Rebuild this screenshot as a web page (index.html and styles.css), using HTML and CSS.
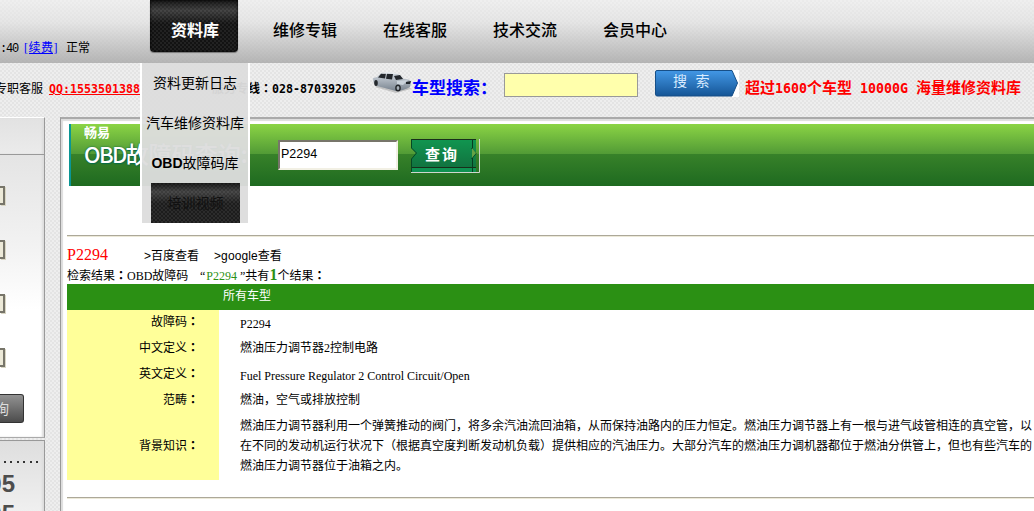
FILE: index.html
```html
<!DOCTYPE html>
<html lang="zh-CN">
<head>
    <meta charset="UTF-8">
    <title>OBD故障码查询</title>
    <link rel="stylesheet" href="styles.css">
</head>
<body>
    <div class="header">
        <div class="account"><span class="num">:40</span> <a href="#">[续费]</a> 正常</div>
        <ul class="nav">
            <li class="active"><a href="#">资料库</a>
                <ul class="dropdown">
                    <li>资料更新日志</li>
                    <li>汽车维修资料库</li>
                    <li><b>OBD</b>故障码库</li>
                    <li class="dark">培训视频</li>
                </ul>
            </li>
            <li><a href="#">维修专辑</a></li>
            <li><a href="#">在线客服</a></li>
            <li><a href="#">技术交流</a></li>
            <li><a href="#">会员中心</a></li>
        </ul>
    </div>

    <div class="contact">
        <div class="service"><span class="plain">专职客服</span><a href="#">QQ:1553501388</a><span class="hotline">服务专线<span class="colon" lang="zh-TW">：</span><i>028-87039205</i></span></div>
        <svg class="car" width="40" height="22" viewBox="0 0 40 22">
            <defs>
                <linearGradient id="paint" x1="0" y1="0" x2="0" y2="1">
                    <stop offset="0" stop-color="#d5dbe2"/>
                    <stop offset="1" stop-color="#78838f"/>
                </linearGradient>
            </defs>
            <path d="M3 15L24 21L39 17L35 13L8 11Z" fill="#aaa" opacity=".6"/>
            <path d="M1 6L5 5L9 1Q18-1 26 2L32 7Q38 7 39 10L38 15Q31 19 24 19L5 14Q1 12 1 6Z" fill="url(#paint)"/>
            <path d="M6 5.500L9 1.800L14 1.500L13 6.500Z M15 1.500L21 2L20 7.500L14 6.700Z M22 4L28 3L31 7L24 8Z" fill="#23272c"/>
            <path d="M9 1.500Q18-1 26 2L20 1.800Z" fill="#eef1f4"/>
            <path d="M25 9L36 8L31 13L25 12Z" fill="#c9d2da"/>
            <path d="M34 10L39 9L38 12L34 12Z" fill="#20262b"/>
            <ellipse cx="4" cy="11" rx="1.800" ry="3" fill="#24282c"/>
            <ellipse cx="26" cy="16" rx="2.800" ry="3.500" fill="#22262a"/>
            <ellipse cx="26" cy="16" rx="1.400" ry="2" fill="#a6afb7"/>
        </svg>
        <span class="car-label">车型搜索：</span>
        <input class="car-input" type="text">
        <div class="search-btn">
            <svg width="84" height="27" viewBox="0 0 84 27">
                <defs>
                    <linearGradient id="blue" x1="0" y1="0" x2="0" y2="1">
                        <stop offset="0" stop-color="#4398e6"/>
                        <stop offset="1" stop-color="#155596"/>
                    </linearGradient>
                </defs>
                <path d="M76 0H84V27H76Z" fill="#fff"/>
                <path d="M2 .5H77L82.500 13L77 26H2Q.5 26 .5 24V2Q.5.5 2 .5Z" fill="url(#blue)" stroke="#174f87"/>
            </svg>
            <span>搜&nbsp;索</span>
        </div>
        <div class="slogan">超过<i>1600</i>个车型<i>&nbsp;10000G&nbsp;</i>海量维修资料库</div>
    </div>

    <div class="main">
        <div class="sidebar">
            <div class="panel filter">
                <div class="panel-title"></div>
                <div class="field"></div>
                <div class="field"></div>
                <div class="field"></div>
                <div class="field"></div>
                <div class="query">查询</div>
            </div>
            <div class="panel phone">
                <div class="dots"></div>
                <div>028-87039205</div>
                <div>028-87039205</div>
            </div>
        </div>

        <div class="content">
            <div class="banner">
                <div class="banner-title"><small>畅易</small><strong><span>OBD</span>故障码查询:</strong></div>
                <input class="code-input" type="text" value="P2294">
                <div class="code-btn">
                    <svg width="69" height="34" viewBox="0 0 69 34">
                        <defs>
                            <linearGradient id="green" x1="0" y1="0" x2="0" y2="1">
                                <stop offset="0" stop-color="#119650"/>
                                <stop offset="1" stop-color="#116d3d"/>
                            </linearGradient>
                        </defs>
                        <path d="M0 0H65V33H0V20L5 14L0 9Z" fill="url(#green)"/>
                        <path d="M0 29H65V33H0Z" fill="#0f9252"/>
                        <path d="M0 .5H65M0 28.500H65" stroke="#182f1a"/>
                        <path d="M.5 0V9L5.500 14L.5 20V33" fill="none" stroke="#064724"/>
                        <path d="M61.500 0V33M60.500 9L65 14.500L60.500 20" fill="none" stroke="#063d21"/>
                        <path d="M61 9L65 14L61 19Z" fill="#65a346"/>
                        <path d="M68.500 0V33.500H0" fill="none" stroke="#cfd6cf"/>
                    </svg>
                    <span>查询</span>
                </div>
            </div>

            <hr class="line">
            <div class="links"><span class="code">P2294</span><span class="baidu">&gt;百度查看</span><span class="google">&gt;google查看</span></div>
            <div class="summary">检索结果<span class="colon" lang="zh-TW">：</span><span class="sum-obd">OBD故障码</span>“<em>P2294</em> ”共有<strong>1</strong>个结果<span class="colon" lang="zh-TW">：</span></div>

            <div class="table-head">所有车型</div>
            <div class="result">
                <div class="label">故障码<span class="colon" lang="zh-TW">：</span></div>
                <div class="value latin">P2294</div>
                <div class="label">中文定义<span class="colon" lang="zh-TW">：</span></div>
                <div class="value">燃油压力调节器2控制电路</div>
                <div class="label">英文定义<span class="colon" lang="zh-TW">：</span></div>
                <div class="value latin">Fuel Pressure Regulator 2 Control Circuit/Open</div>
                <div class="label">范畴<span class="colon" lang="zh-TW">：</span></div>
                <div class="value">燃油，空气或排放控制</div>
                <div class="label">背景知识<span class="colon" lang="zh-TW">：</span></div>
                <div class="value">燃油压力调节器利用一个弹簧推动的阀门，将多余汽油流回油箱，从而保持油路内的压力恒定。燃油压力调节器上有一根与进气歧管相连的真空管，以<br>在不同的发动机运行状况下（根据真空度判断发动机负载）提供相应的汽油压力。大部分汽车的燃油压力调机器都位于燃油分供管上，但也有些汽车的<br>燃油压力调节器位于油箱之内。</div>
            </div>
            <hr class="line bottom">
        </div>
    </div>
</body>
</html>
```
FILE: styles.css
```css
* {
    box-sizing: border-box;
}
body {
    margin: 0;
    width: 1034px;
    height: 511px;
    overflow: hidden;
    background: repeating-conic-gradient(#e4e4e4 0 25%, #eeeeee 0 50%) 0 0 / 4px 4px;
    color: #000;
    font-family: "Liberation Serif", "Noto Sans CJK SC", serif;
    font-size: 12px;
    white-space: nowrap;
    text-spacing-trim: space-all;
}
ul {
    list-style: none;
    margin: 0;
    padding: 0;
}
.colon {
    font-family: "Noto Sans CJK TC", sans-serif;
    font-weight: bold;
    line-height: 1;
}

/* header */
.header {
    display: flex;
    height: 63px;
    background: linear-gradient(rgba(240, 240, 240, 0.6) 0, rgba(225, 225, 225, 0.6) 35%, rgba(165, 165, 165, 0.78) 100%);
}
.account {
    width: 139px;
    padding-top: 39px;
    line-height: 18px;
    word-spacing: 3px;
}
.account a {
    margin-right: 2px;
    color: #0000ff;
    letter-spacing: 0.5px;
}
.num {
    font-family: "Liberation Mono", monospace;
    font-size: 12px;
    letter-spacing: -1.2px;
}
.nav {
    display: flex;
    font-family: "Liberation Sans", "Noto Sans CJK SC", sans-serif;
}
.nav > li {
    position: relative;
    width: 110px;
    padding: 0 11px;
    text-align: center;
}
.nav > li > a {
    display: block;
    height: 52px;
    padding-left: 2px;
    line-height: 61px;
    color: #000;
    font-size: 16px;
    font-weight: 500;
    text-decoration: none;
}
.nav > .active > a {
    background: linear-gradient(rgba(20, 20, 20, 0.75), rgba(85, 85, 85, 0.6) 20%, rgba(20, 20, 20, 0.5) 45%, rgba(20, 20, 20, 0.5)), repeating-conic-gradient(#111 0 25%, #303030 0 50%) 0 0 / 4px 4px;
    border-radius: 0 0 4px 4px;
    box-shadow: 0 1px 1px #777, inset 0 0 3px #000;
    color: #fff;
    font-weight: bold;
}
.dropdown {
    position: absolute;
    z-index: 5;
    left: 1px;
    top: 63px;
    width: 110px;
    height: 160px;
    border: solid #fff;
    border-width: 0 2px;
    background: rgba(221, 221, 221, 0.96);
    background-clip: padding-box;
    font-size: 14px;
    line-height: 40px;
}
.dropdown li {
    height: 40px;
    margin: 0 -2px;
}
.dropdown .dark {
    width: 89px;
    margin: 0 auto 0 9px;
    background: linear-gradient(rgba(20, 20, 20, 0.75), rgba(85, 85, 85, 0.6) 22%, rgba(30, 30, 30, 0.5) 50%), repeating-conic-gradient(#1b1b1b 0 25%, #3a3a3a 0 50%) 0 0 / 4px 4px;
    color: #111;
}

/* contact row */
.contact {
    display: flex;
    height: 54px;
}
.service {
    display: flex;
    justify-content: flex-end;
    width: 356px;
    padding-top: 16px;
    line-height: 20px;
    font-family: "DejaVu Sans Mono", "Noto Sans CJK SC", monospace;
    font-weight: bold;
}
.service > * {
    flex-shrink: 0;
}
.service .plain {
    margin-right: 6px;
    font-weight: normal;
}
.service a,
.service i {
    font-size: 11.63px;
    font-style: normal;
}
.service a {
    color: #ff0000;
}
.hotline {
    width: 216px;
    text-align: right;
}
.car {
    margin: 9px 0 0 16px;
}
.car-label {
    width: 92px;
    padding-top: 12px;
    line-height: 24px;
    color: #0000ff;
    font-family: "Noto Sans CJK SC", sans-serif;
    font-size: 17px;
    font-weight: bold;
}
.car-input {
    width: 134px;
    height: 24px;
    margin-top: 10px;
    border: 1px solid #999;
    background: #ffffac;
}
.search-btn {
    display: grid;
    width: 84px;
    height: 27px;
    margin: 7px 0 0 17px;
}
.search-btn > * {
    grid-area: 1 / 1;
}
.search-btn span {
    padding-left: 18px;
    line-height: 25px;
    color: #d9ecff;
    font-family: "Liberation Mono", "Noto Sans CJK SC", monospace;
    font-size: 14px;
}
.slogan {
    margin-left: 6px;
    padding-top: 13px;
    line-height: 22px;
    color: #ff0000;
    font-family: "Noto Sans CJK SC", sans-serif;
    font-size: 15px;
    font-weight: bold;
}
.slogan i {
    font-family: "DejaVu Sans Mono", monospace;
    font-size: 13.3px;
    font-style: normal;
}

/* columns */
.main {
    display: flex;
    height: 394px;
}
.sidebar {
    width: 45px;
    margin-right: 15px;
}
.panel {
    overflow: hidden;
    border-right: 1px solid #999;
    box-shadow: inset -2px 0 2px #ddd;
}
.filter {
    height: 321px;
    background: linear-gradient(#dfdfdf, #f2f2f2 40%, #fff 60%);
    border-top: 1px solid #fff;
    border-bottom: 1px solid #aaa;
}
.panel-title {
    height: 37px;
    margin-bottom: 31px;
    border-bottom: 1px solid #999;
    background: linear-gradient(#e2e2e2, #ebebeb);
    box-shadow: inset -2px 0 2px #ddd;
}
.field {
    width: 5px;
    height: 19px;
    margin-bottom: 35px;
    border: solid #77756a;
    border-width: 2px 2px 2px 0;
    background: #ece9d8;
    box-shadow: 1px 1px 0 #d9d6c4;
}
.query {
    display: flex;
    justify-content: flex-end;
    width: 24px;
    height: 29px;
    margin-top: -8px;
    padding-right: 14px;
    border: 1px solid #333;
    border-left: 0;
    border-radius: 0 3px 3px 0;
    background: linear-gradient(#929292, #4c4c4c);
    color: #ddd;
    font-family: "Noto Sans CJK SC", sans-serif;
    font-size: 14px;
    line-height: 27px;
}
.phone {
    height: 80px;
    margin-top: 2px;
    border-top: 1px solid #999;
    background: linear-gradient(#dedede, #f2f2f2);
    color: #4d4d4d;
    font-family: "Liberation Sans", sans-serif;
    font-size: 24px;
    font-weight: bold;
    line-height: 30px;
}
.phone div {
    display: flex;
    justify-content: flex-end;
    width: 15px;
}
.phone .dots {
    width: 42px;
    height: 2px;
    margin: 20px 0 6px;
    background: repeating-linear-gradient(90deg, transparent 0 4px, #333 4px 6px, transparent 6px 6.5px);
}
.content {
    width: 974px;
    padding: 5px 0 0 4px;
    border: solid #999;
    border-width: 2px 0 0 1px;
    border-top-color: #aaa;
    background: #fff;
    box-shadow: inset 2px 2px 1px #ddd;
}

/* green banner */
.banner {
    display: flex;
    height: 62px;
    margin-left: 4px;
    border-left: 2px solid #0a9695;
    background: linear-gradient(#8bd445, #529b36 48%, #378129 49%, #1e6a20);
}
.banner-title {
    width: 207px;
    padding-left: 13px;
    color: #fff;
    font-family: "Noto Sans CJK SC", sans-serif;
}
.banner-title small {
    display: block;
    height: 16px;
    font-size: 13px;
    font-weight: bold;
    line-height: 16px;
}
.banner-title strong {
    display: block;
    font-size: 23px;
    font-weight: 500;
    line-height: 26px;
    text-shadow: 0 0 2px #075f48, 1px 1px 1px #08704a;
}
.banner-title strong span {
    font-size: 22px;
    letter-spacing: -1.6px;
}
.code-input {
    width: 120px;
    height: 30px;
    margin-top: 16px;
    padding: 0 1px 3px;
    border: 2px solid;
    border-color: #77756a #f2f0e4 #f2f0e4 #77756a;
    background: #fff;
    font-family: "Liberation Sans", sans-serif;
    font-size: 12.5px;
}
.code-btn {
    display: grid;
    width: 69px;
    height: 34px;
    margin: 15px 0 0 13px;
}
.code-btn > * {
    grid-area: 1 / 1;
}
.code-btn span {
    padding-left: 14px;
    color: #fff;
    font-family: "Noto Sans CJK SC", sans-serif;
    font-size: 15px;
    font-weight: bold;
    letter-spacing: 2px;
    line-height: 29px;
}

/* result */
.line {
    height: 2px;
    margin: 49px 0 0 2px;
    border: 0;
    border-top: 1px solid #aca899;
    background: #ece9d8;
}
.links {
    display: flex;
    height: 28px;
    padding-left: 2px;
    font-family: "Liberation Sans", "Noto Sans CJK SC", sans-serif;
    line-height: 39px;
}
.links .code {
    width: 77px;
    color: #ff0000;
    font-family: "Liberation Serif", serif;
    font-size: 16px;
    line-height: 36px;
}
.links .baidu {
    width: 70px;
}
.links .google {
    letter-spacing: 0.1px;
}
.summary {
    height: 19px;
    padding-left: 2px;
    line-height: 22px;
}
.sum-obd {
    display: inline-block;
    width: 73px;
}
.summary em {
    margin-left: 1px;
    color: #2b9014;
    font-style: normal;
}
.summary strong {
    color: #2b9014;
    font-size: 16px;
    line-height: 16px;
}
.table-head {
    height: 26px;
    margin-left: 2px;
    padding-left: 156px;
    background: #2b9014;
    color: #fff;
    line-height: 24px;
}
.result {
    display: grid;
    grid-template-columns: 152px auto;
    grid-template-rows: 26px 26px 26px 26px 66px;
    margin-left: 2px;
}
.label {
    display: flex;
    align-items: center;
    justify-content: flex-end;
    padding: 0 20px 4px 0;
    background: #ffff99;
}
.value {
    align-self: center;
    padding: 0 0 2px 21px;
    line-height: 20px;
}
.value.latin {
    padding-top: 2px;
    padding-bottom: 0;
}
.line.bottom {
    margin-top: 17px;
}
```
